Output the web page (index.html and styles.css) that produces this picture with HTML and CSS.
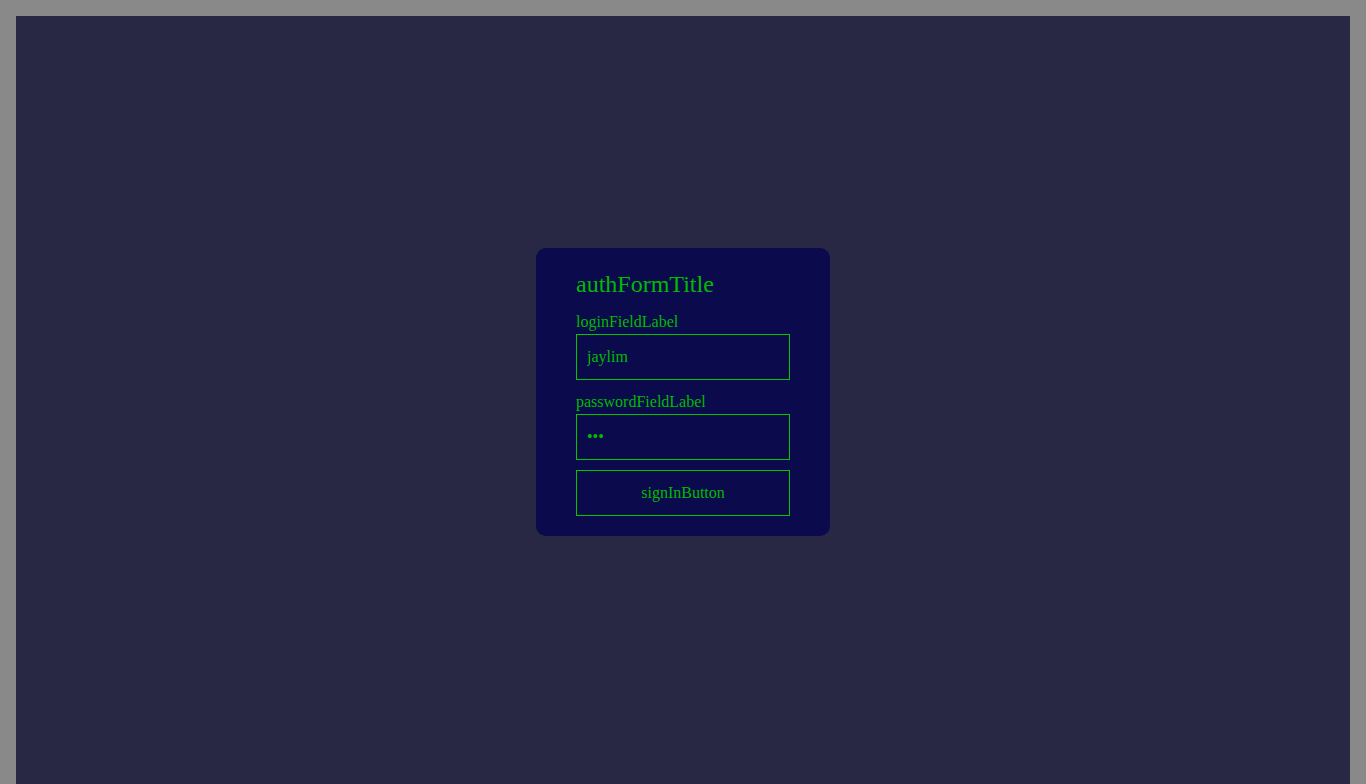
FILE: index.html
```html
<!DOCTYPE html>
<html>
<head>
<meta charset="utf-8">
<link rel="stylesheet" href="styles.css">
</head>
<body>
<main class="stage">
  <form class="auth-card">
    <h1 class="auth-title">authFormTitle</h1>
    <label class="field-label" for="login">loginFieldLabel</label>
    <input class="field-input" id="login" type="text" value="jaylim">
    <label class="field-label field-label-second" for="password">passwordFieldLabel</label>
    <input class="field-input" id="password" type="password" value="abc">
    <button class="submit-btn" type="button">signInButton</button>
  </form>
</main>
</body>
</html>
```
FILE: styles.css
```css
html, body {
  margin: 0;
  padding: 0;
}
body {
  background: #898989;
  padding: 16px 16px 0 16px;
  font-family: "Liberation Serif", "Times New Roman", serif;
}
.stage {
  height: 784px;
  box-sizing: border-box;
  padding-bottom: 32px;
  background: #282844;
  display: flex;
  align-items: center;
  justify-content: center;
}
.auth-card {
  width: 294px;
  box-sizing: border-box;
  padding: 22px 40px 20px 40px;
  background: #0a0a4c;
  border-radius: 10px;
  display: flex;
  flex-direction: column;
  color: #00bb00;
}
.auth-title {
  margin: 0 0 15px 0;
  font-size: 24px;
  line-height: 28px;
  font-weight: normal;
}
.field-label {
  font-size: 16px;
  line-height: 18px;
  margin-bottom: 3px;
}
.field-label-second {
  margin-top: 13px;
}
.field-input,
.submit-btn {
  box-sizing: border-box;
  width: 100%;
  height: 46px;
  margin: 0;
  border: 1px solid #00c800;
  border-radius: 0;
  background: transparent;
  color: #00bb00;
  font-family: "Liberation Serif", "Times New Roman", serif;
  font-size: 16px;
  outline: none;
}
.field-input {
  padding: 0 10px;
}
.submit-btn {
  margin-top: 10px;
  cursor: pointer;
}
```
